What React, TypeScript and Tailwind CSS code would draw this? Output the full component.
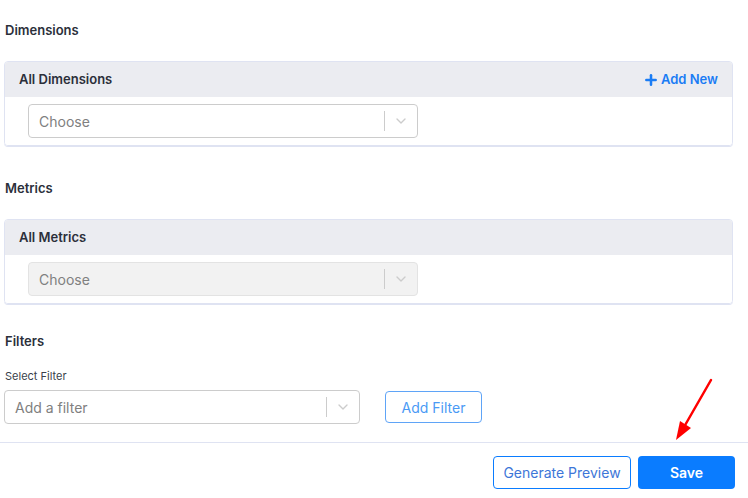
import { ChevronDown, Plus } from 'lucide-react';

type SelectProps = {
  placeholder: string;
  disabled?: boolean;
  className?: string;
};

function FakeSelect({ placeholder, disabled, className = '' }: SelectProps) {
  return (
    <div
      className={`flex h-[34px] items-center rounded-[4px] border border-[#cccccc] ${
        disabled ? 'bg-[#f2f2f2] border-[#e3e3e3]' : 'bg-white'
      } ${className}`}
    >
      <span className="flex-1 truncate pl-[10px] text-[14px] text-[#808080]">
        {placeholder}
      </span>
      <span className="h-[20px] w-px bg-[#cccccc]" />
      <span className="grid w-[32px] place-items-center text-[#cccccc]">
        <ChevronDown size={16} strokeWidth={2} />
      </span>
    </div>
  );
}

type CardProps = {
  title: string;
  action?: boolean;
  disabled?: boolean;
};

function SelectCard({ title, action, disabled }: CardProps) {
  return (
    <div className="overflow-hidden rounded-[4px] border border-[#dfe3f2] shadow-[0_1px_0_#dfe3f2]">
      <div className="flex h-[35px] items-center justify-between bg-[#ebecf1] pl-[14px] pr-[14px]">
        <span className="text-[13px] font-semibold text-[#2b2f3a]">{title}</span>
        {action && (
          <button
            type="button"
            className="inline-flex items-center gap-[2px] text-[13px] font-semibold text-[#1a7cf5]"
          >
            <Plus size={16} strokeWidth={3.8} />
            Add New
          </button>
        )}
      </div>
      <div className="bg-white py-[7px] pl-[23px]">
        <FakeSelect placeholder="Choose" disabled={disabled} className="w-[390px]" />
      </div>
    </div>
  );
}

export default function App() {
  return (
    <div
      className="relative h-[498px] w-[748px] overflow-hidden bg-white"
      style={{ fontFamily: 'Inter, "Open Sans", Arial, sans-serif' }}
    >
      <div className="pl-[4px] pr-[15px] pt-[20px]">
        {/* Dimensions */}
        <h3 className="pl-[1px] text-[13px] font-semibold leading-[20px] text-[#2b2f3a]">
          Dimensions
        </h3>
        <div className="mt-[21px]">
          <SelectCard title="All Dimensions" action />
        </div>

        {/* Metrics */}
        <h3 className="mt-[32px] pl-[1px] text-[13px] font-semibold leading-[20px] text-[#2b2f3a]">
          Metrics
        </h3>
        <div className="mt-[21px]">
          <SelectCard title="All Metrics" disabled />
        </div>

        {/* Filters */}
        <h3 className="mt-[27px] pl-[1px] text-[13px] font-semibold leading-[20px] text-[#2b2f3a]">
          Filters
        </h3>
        <div className="mt-[17px] pl-[1px] text-[11px] leading-[16px] text-[#3a3f4a]">
          Select Filter
        </div>
        <div className="mt-[6px] flex items-center gap-[25px]">
          <FakeSelect placeholder="Add a filter" className="w-[356px]" />
          <button
            type="button"
            className="h-[32px] w-[97px] rounded-[4px] border border-[#5fa4f7] text-[14px] text-[#4a9af5]"
          >
            Add Filter
          </button>
        </div>
      </div>

      {/* Footer */}
      <div className="mt-[18px] border-t border-[#dfe3f2]" />
      <div className="flex justify-end gap-[7px] pr-[13px] pt-[13px]">
        <button
          type="button"
          className="h-[33px] w-[138px] rounded-[4px] border border-[#0a7cff] text-[14px] text-[#3d76d8]"
        >
          Generate Preview
        </button>
        <button
          type="button"
          className="h-[33px] w-[97px] rounded-[4px] bg-[#0a7cff] text-[14px] font-semibold text-white"
        >
          Save
        </button>
      </div>

      {/* annotation arrow */}
      <svg
        className="pointer-events-none absolute left-0 top-0"
        width="748"
        height="498"
        viewBox="0 0 748 498"
      >
        <line x1="711" y1="380" x2="684" y2="427" stroke="#ff0000" strokeWidth="2.5" strokeLinecap="round" />
        <polygon points="676,440 680,421 691,428" fill="#ff0000" />
      </svg>
    </div>
  );
}
